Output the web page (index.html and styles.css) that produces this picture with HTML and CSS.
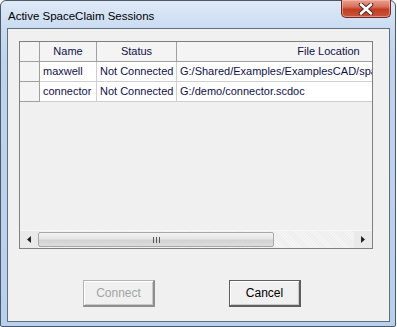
FILE: index.html
```html
<!DOCTYPE html>
<html lang="en">
<head>
    <meta charset="UTF-8">
    <title>Active SpaceClaim Sessions</title>
    <link rel="stylesheet" href="styles.css">
</head>
<body>
    <div class="window">
        <div class="titlebar">
            <span class="title">Active SpaceClaim Sessions</span>
            <div class="close-btn">
                <svg width="20" height="12" viewBox="0 0 20 12">
                    <path d="M5 1.5 L15 10.5 M15 1.5 L5 10.5" stroke="#4a2a26" stroke-width="4.5" stroke-linecap="round"/>
                    <path d="M5 1.5 L15 10.5 M15 1.5 L5 10.5" stroke="#ffffff" stroke-width="2.6" stroke-linecap="round"/>
                </svg>
            </div>
        </div>

        <div class="client">
            <div class="grid">
                <div class="row header">
                    <div class="cell rowhead"></div>
                    <div class="cell col-name center">Name</div>
                    <div class="cell col-status center">Status</div>
                    <div class="cell col-path center">File Location</div>
                </div>
                <div class="row">
                    <div class="cell rowhead"></div>
                    <div class="cell col-name">maxwell</div>
                    <div class="cell col-status">Not Connected</div>
                    <div class="cell col-path">G:/Shared/Examples/ExamplesCAD/spac</div>
                </div>
                <div class="row">
                    <div class="cell rowhead"></div>
                    <div class="cell col-name">connector</div>
                    <div class="cell col-status">Not Connected</div>
                    <div class="cell col-path">G:/demo/connector.scdoc</div>
                </div>
                <div class="grid-fill"></div>
                <div class="hscroll">
                    <div class="arrow-btn">
                        <svg width="4" height="7" viewBox="0 0 4 7"><path d="M4 0 L0 3.5 L4 7 Z" fill="#222"/></svg>
                    </div>
                    <div class="track">
                        <div class="thumb">
                            <span class="grip"></span><span class="grip"></span><span class="grip"></span>
                        </div>
                    </div>
                    <div class="arrow-btn">
                        <svg width="4" height="7" viewBox="0 0 4 7"><path d="M0 0 L4 3.5 L0 7 Z" fill="#222"/></svg>
                    </div>
                </div>
            </div>

            <div class="buttons">
                <button class="btn" disabled>Connect</button>
                <button class="btn default">Cancel</button>
            </div>
        </div>
    </div>
</body>
</html>
```

FILE: styles.css
```css
body {
    margin: 0;
    padding: 0;
    background-color: #ffffff;
    font-family: 'Liberation Sans', Arial, sans-serif;
}
.window {
    width: 394px;
    height: 325px;
    border: 1px solid #4b5866;
    border-radius: 6px 6px 2px 2px;
    background: linear-gradient(to bottom, #dfeaf8 0px, #cbdcf2 26px, #bed3ee 60px, #b9d0ec 100%);
    display: flex;
    flex-direction: column;
}
.titlebar {
    height: 27px;
    display: flex;
    align-items: flex-start;
    justify-content: space-between;
    padding-left: 7px;
    padding-right: 4px;
}
.title {
    font-size: 11.5px;
    color: #000000;
    margin-top: 9px;
}
.close-btn {
    width: 48px;
    height: 17px;
    margin-top: -1px;
    border: 1px solid #6b2a22;
    border-top: none;
    border-radius: 0 0 5px 5px;
    background: linear-gradient(to bottom, #e8a190 0%, #d8705a 40%, #c23c22 55%, #c8563a 100%);
    box-shadow: inset 0 0 0 1px rgba(255, 200, 190, 0.5);
    display: flex;
    align-items: center;
    justify-content: center;
}
.client {
    margin: 0 5px 0 6px;
    height: 292px;
    border: 1px solid #5f6f80;
    background-color: #f0f0f0;
    display: flex;
    flex-direction: column;
}
.grid {
    margin: 12px 0 0 11px;
    width: 352px;
    height: 206px;
    border: 1px solid #7f7f7f;
    background-color: #f0f0f0;
    overflow: hidden;
    display: flex;
    flex-direction: column;
}
.row {
    display: flex;
    height: 20px;
    flex-shrink: 0;
}
.cell {
    box-sizing: border-box;
    height: 20px;
    border-right: 1px solid #cfcfcf;
    border-bottom: 1px solid #cfcfcf;
    background-color: #ffffff;
    font-size: 11px;
    line-height: 19px;
    color: #10104a;
    padding-left: 3px;
    white-space: nowrap;
    overflow: hidden;
    flex-shrink: 0;
}
.center {
    text-align: center;
    padding-left: 0;
}
.rowhead {
    width: 20px;
    background-color: #f4f4f4;
    border-right-color: #a0a0a0;
    border-bottom-color: #a0a0a0;
}
.header .cell {
    background-color: #f4f4f4;
    border-right-color: #a0a0a0;
    border-bottom-color: #a0a0a0;
}
.col-name {
    width: 57px;
}
.col-status {
    width: 80px;
}
.col-path {
    width: 304px;
}
.grid-fill {
    flex: 1;
}
.hscroll {
    height: 18px;
    display: flex;
    background-color: #eaeaea;
    border-top: 1px solid #f7f7f7;
    box-sizing: border-box;
}
.arrow-btn {
    width: 18px;
    display: flex;
    align-items: center;
    justify-content: center;
    flex-shrink: 0;
}
.track {
    flex: 1;
    display: flex;
    padding: 1px 0;
    background: repeating-linear-gradient(45deg, #ededed 0px, #ededed 1px, #f5f5f5 1px, #f5f5f5 2px);
}
.thumb {
    width: 234px;
    border: 1px solid #a8a8a8;
    border-radius: 2px;
    background: linear-gradient(to bottom, #f3f3f3 0%, #e6e6e6 45%, #d2d2d2 55%, #dcdcdc 100%);
    display: flex;
    align-items: center;
    justify-content: center;
    gap: 2px;
}
.grip {
    width: 1px;
    height: 6px;
    background-color: #555555;
}
.buttons {
    display: flex;
    gap: 74px;
    padding-left: 75px;
    margin-top: 31px;
}
.btn {
    width: 72px;
    height: 27px;
    font-family: 'Liberation Sans', Arial, sans-serif;
    font-size: 12px;
    color: #000000;
    background-color: #f0f0f0;
    border: 1px solid #5e5e5e;
    border-right-width: 2px;
    border-bottom-width: 2px;
    box-shadow: inset 1px 1px 0 #ffffff, inset -1px -1px 0 #c8c8c8;
    padding: 0;
}
.btn:disabled {
    color: #a3a3a3;
    border-color: #b4b4b4;
    border-right-color: #8e8e8e;
    border-bottom-color: #8e8e8e;
}
```
